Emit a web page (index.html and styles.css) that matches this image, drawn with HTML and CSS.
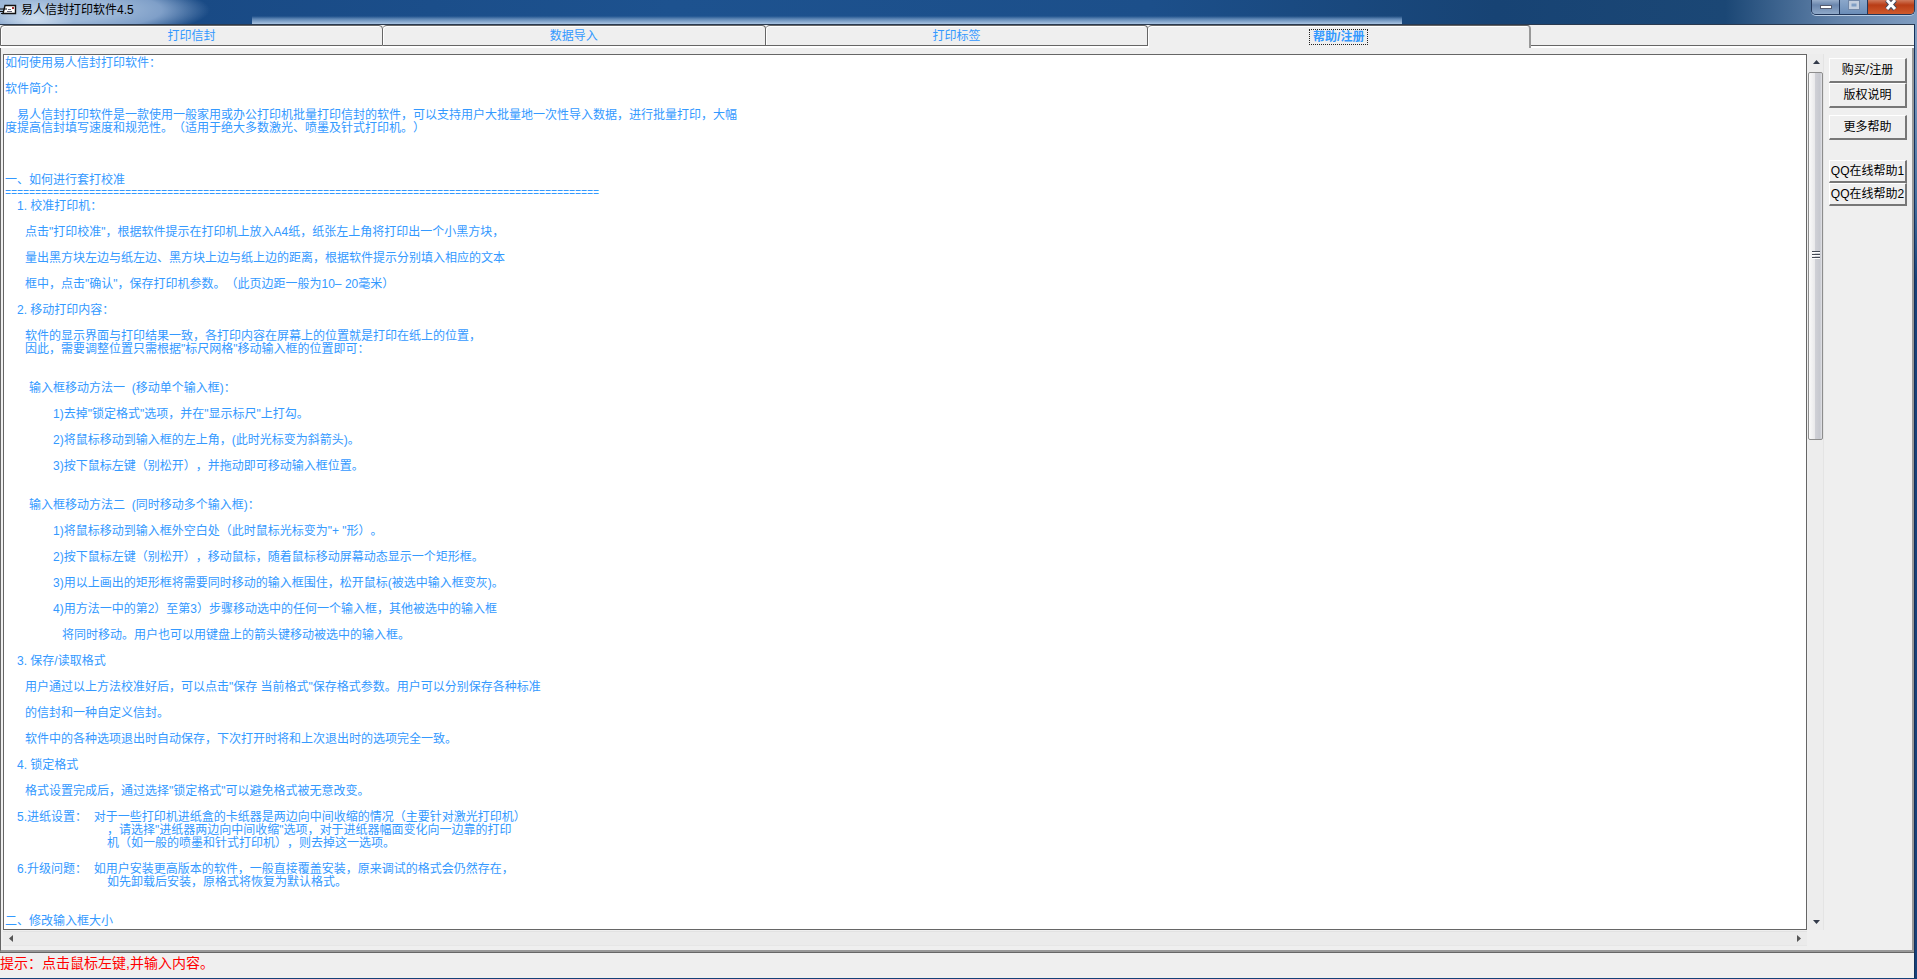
FILE: index.html
```html
<!DOCTYPE html>
<html lang="zh-CN">
<head>
<meta charset="utf-8">
<title>易人信封打印软件4.5</title>
<link rel="stylesheet" href="styles.css">
</head>
<body>
<header class="titlebar">
  <svg class="app-icon" width="17" height="12" viewBox="0 0 17 12" aria-hidden="true">
    <path d="M5 1.500h10.500v8H3z" fill="#fff" stroke="#111" stroke-width="1.400"/>
    <path d="M0 5h7M0 7.500h4M1 9.500h13" stroke="#111" stroke-width="1.200"/>
    <path d="M7 7.500h5M8 5.500h3" stroke="#667" stroke-width="1"/>
    <path d="M12 3h2v2h-2z" fill="#a33"/>
  </svg>
  <h1 class="caption">易人信封打印软件4.5</h1>
  <div class="window-buttons">
    <button class="win-btn" aria-label="最小化"><svg width="12" height="14" viewBox="0 0 12 14"><rect x=".5" y="5.500" width="11" height="3" fill="#fff" stroke="#555c70"/></svg></button>
    <button class="win-btn dim" aria-label="最大化"><svg width="12" height="14" viewBox="0 0 12 14"><rect x="2" y="2" width="8" height="6" fill="none" stroke="#c3cede" stroke-width="3"/><rect x=".5" y=".5" width="11" height="9" fill="none" stroke="#7288a8"/></svg></button>
    <button class="win-btn close" aria-label="关闭"><svg width="14" height="14" viewBox="0 0 14 14"><path d="M3 0l8 9M11 0L3 9" stroke="#444a5c" stroke-width="5"/><path d="M3 0l8 9M11 0L3 9" stroke="#fff" stroke-width="3"/></svg></button>
  </div>
</header>
<main class="client">
  <nav class="tabs" role="tablist">
    <button class="tab" role="tab">打印信封</button>
    <button class="tab" role="tab">数据导入</button>
    <button class="tab" role="tab">打印标签</button>
    <button class="tab active" role="tab" aria-selected="true"><span class="focus">帮助/注册</span></button>
    <div class="tab-rest"></div>
  </nav>
  <section class="panel">
    <div class="viewer">
      <article class="memo">
<p>如何使用易人信封打印软件：</p>
<p></p>
<p>软件简介：</p>
<p></p>
<p class="in-a">易人信封打印软件是一款使用一般家用或办公打印机批量打印信封的软件，可以支持用户大批量地一次性导入数据，进行批量打印，大幅</p>
<p>度提高信封填写速度和规范性。（适用于绝大多数激光、喷墨及针式打印机。）</p>
<p></p>
<p></p>
<p></p>
<p>一、如何进行套打校准</p>
<p class="rule">===================================================================================================</p>
<p class="in-a">1. 校准打印机：</p>
<p></p>
<p class="in-b">点击"打印校准"，根据软件提示在打印机上放入A4纸，纸张左上角将打印出一个小黑方块，</p>
<p></p>
<p class="in-b">量出黑方块左边与纸左边、黑方块上边与纸上边的距离，根据软件提示分别填入相应的文本</p>
<p></p>
<p class="in-b">框中，点击"确认"，保存打印机参数。（此页边距一般为10– 20毫米）</p>
<p></p>
<p class="in-a">2. 移动打印内容：</p>
<p></p>
<p class="in-b">软件的显示界面与打印结果一致，各打印内容在屏幕上的位置就是打印在纸上的位置，</p>
<p class="in-b">因此，需要调整位置只需根据"标尺网格"移动输入框的位置即可：</p>
<p></p>
<p></p>
<p class="in-c">输入框移动方法一  (移动单个输入框)：</p>
<p></p>
<p class="in-d">1)去掉"锁定格式"选项，并在"显示标尺"上打勾。</p>
<p></p>
<p class="in-d">2)将鼠标移动到输入框的左上角，(此时光标变为斜箭头)。</p>
<p></p>
<p class="in-d">3)按下鼠标左键（别松开），并拖动即可移动输入框位置。</p>
<p></p>
<p></p>
<p class="in-c">输入框移动方法二  (同时移动多个输入框)：</p>
<p></p>
<p class="in-d">1)将鼠标移动到输入框外空白处（此时鼠标光标变为"+ "形）。</p>
<p></p>
<p class="in-d">2)按下鼠标左键（别松开），移动鼠标，随着鼠标移动屏幕动态显示一个矩形框。</p>
<p></p>
<p class="in-d">3)用以上画出的矩形框将需要同时移动的输入框围住，松开鼠标(被选中输入框变灰)。</p>
<p></p>
<p class="in-d">4)用方法一中的第2）至第3）步骤移动选中的任何一个输入框，其他被选中的输入框</p>
<p></p>
<p class="in-e">将同时移动。用户也可以用键盘上的箭头键移动被选中的输入框。</p>
<p></p>
<p class="in-a">3. 保存/读取格式</p>
<p></p>
<p class="in-b">用户通过以上方法校准好后，可以点击"保存 当前格式"保存格式参数。用户可以分别保存各种标准</p>
<p></p>
<p class="in-b">的信封和一种自定义信封。</p>
<p></p>
<p class="in-b">软件中的各种选项退出时自动保存，下次打开时将和上次退出时的选项完全一致。</p>
<p></p>
<p class="in-a">4. 锁定格式</p>
<p></p>
<p class="in-b">格式设置完成后，通过选择"锁定格式"可以避免格式被无意改变。</p>
<p></p>
<p class="in-a">5.进纸设置：  对于一些打印机进纸盒的卡纸器是两边向中间收缩的情况（主要针对激光打印机）</p>
<p class="in-f">，请选择"进纸器两边向中间收缩"选项，对于进纸器幅面变化向一边靠的打印</p>
<p class="in-f">机（如一般的喷墨和针式打印机），则去掉这一选项。</p>
<p></p>
<p class="in-a">6.升级问题：  如用户安装更高版本的软件，一般直接覆盖安装，原来调试的格式会仍然存在，</p>
<p class="in-f">如先卸载后安装，原格式将恢复为默认格式。</p>
<p></p>
<p></p>
<p>二、修改输入框大小</p>
      </article>
      <div class="vbar">
        <button class="arrow" aria-label="向上滚动"><svg width="7" height="4" viewBox="0 0 7 4"><path d="M0 4L3.500 0L7 4z" fill="#333b4a"/></svg></button>
        <div class="thumb"><svg width="8" height="9" viewBox="0 0 8 9"><path d="M0 .5h8M0 3.500h8M0 6.500h8" stroke="#444a55"/><path d="M0 1.500h8M0 4.500h8M0 7.500h8" stroke="#fff"/></svg></div>
        <button class="arrow end" aria-label="向下滚动"><svg width="7" height="4" viewBox="0 0 7 4"><path d="M0 0h7L3.500 4z" fill="#333b4a"/></svg></button>
      </div>
      <div class="hbar">
        <button class="arrow" aria-label="向左滚动"><svg width="4" height="7" viewBox="0 0 4 7"><path d="M4 0v7L0 3.500z" fill="#555"/></svg></button>
        <button class="arrow" aria-label="向右滚动"><svg width="4" height="7" viewBox="0 0 4 7"><path d="M0 0v7L4 3.500z" fill="#555"/></svg></button>
      </div>
    </div>
    <aside class="side">
      <div class="group">
        <button class="cmd">购买/注册</button>
        <button class="cmd">版权说明</button>
      </div>
      <button class="cmd">更多帮助</button>
      <div class="group qq">
        <button class="cmd">QQ在线帮助1</button>
        <button class="cmd">QQ在线帮助2</button>
      </div>
    </aside>
  </section>
  <footer class="status">提示：点击鼠标左键,并输入内容。</footer>
</main>
</body>
</html>
```
FILE: styles.css
```css
* {
  box-sizing: border-box;
}

body {
  margin: 0;
  height: 100vh;
  display: flex;
  flex-direction: column;
  overflow: hidden;
  background: linear-gradient(#7f9cc0, #7f9cc0 70px, #44709f 200px, #164178 280px);
  font: 12px/13px "Liberation Sans", "Noto Sans CJK SC", sans-serif;
  text-spacing-trim: space-all;
}

button {
  font: inherit;
  padding: 0;
  border: 0;
  background: none;
}

.titlebar {
  flex: none;
  height: 24px;
  display: flex;
  align-items: flex-start;
  background:
    radial-gradient(ellipse 40px 18px at 35px 18px, rgba(220, 232, 245, .8), transparent),
    radial-gradient(ellipse 160px 30px at 50px 10px, #9db8d8 40%, #7f9fc8 70%, transparent),
    linear-gradient(transparent 16px, #5f87b5 19px, #a9c4e2 24px) 635px 0 / 60% 100% no-repeat,
    linear-gradient(90deg, #2f5f9b 0, #194a85 10%, #1d528f 35%, #1c4f8a 60%, #174374 78%, #1b4775 90%, #6484ab 96%, #7f9cc0);
  background-position: 0 0, 0 0, 252px 0, 0 0;
}

.app-icon {
  margin: 4px 4px 0 0;
}

.caption {
  margin: 2px 0 0;
  flex: 1;
  font-size: 12px;
  font-weight: normal;
  line-height: 16px;
  color: #000;
}

.window-buttons {
  display: flex;
  height: 15px;
  margin-right: 2px;
  border: 1px solid #22375a;
  border-top: 0;
  border-radius: 0 0 5px 5px;
  overflow: hidden;
  box-shadow: 0 1px 0 #b9cce2;
}

.win-btn {
  width: 28px;
  display: flex;
  justify-content: center;
  background: linear-gradient(#98aecb, #6a86ad 5px, #8fa9c9);
  border-right: 1px solid #22375a;
}

.win-btn.dim {
  background: linear-gradient(#8ba7ca, #6b8db8);
}

.win-btn.close {
  width: 46px;
  border-right: 0;
  background: linear-gradient(#d07a5c, #b93d16 5px, #cf5a2c);
}

.client {
  flex: 1;
  min-height: 0;
  display: flex;
  flex-direction: column;
  margin: 0 2px 1px 0;
  border-top: 1px solid #2a3a50;
  border-right: 1px solid #14305a;
  background: #efefef;
}

.tabs {
  flex: none;
  height: 23px;
  display: flex;
  border-bottom: 2px solid #fff;
}

.tab {
  flex: 0 0 20%;
  height: 21px;
  padding-top: 2px;
  border-top: 1px solid #666;
  border-right: 1px solid #666;
  border-bottom: 1px solid #666;
  border-top-right-radius: 4px;
  border-top-left-radius: 4px;
  box-shadow: inset 1px 1px 0 #fff;
  color: #39f;
}

.tab:first-child {
  border-left: 1px solid #666;
}

.tab.active {
  height: 23px;
  padding-top: 0;
  border-right: 2px solid #999;
  border-bottom: 0;
  background: #efefef;
  font-weight: bold;
}

.focus {
  display: inline-block;
  padding: 0 3px;
  outline: 1px dotted #222;
  line-height: 14px;
}

.tab-rest {
  flex: 1;
  height: 21px;
  border-bottom: 1px solid #666;
}

.panel {
  flex: 1;
  min-height: 0;
  display: flex;
  padding: 6px 4px 4px 2px;
  border-left: 1px solid #666;
  border-right: 2px solid #999;
  border-bottom: 2px solid #999;
}

.viewer {
  flex: 1;
  min-width: 0;
  display: grid;
  grid-template-columns: 1fr 16px;
  grid-template-rows: minmax(0, 1fr) 15px;
  gap: 1px;
}

.memo {
  overflow: hidden;
  padding: 2px 1px;
  border: 1px solid #666;
  background: #fff;
  color: #39f;
}

.memo p {
  margin: 0;
  height: 13px;
  white-space: pre;
}

.memo .in-a { padding-left: 12px; }
.memo .in-b { padding-left: 20px; }
.memo .in-c { padding-left: 24px; }
.memo .in-d { padding-left: 48px; }
.memo .in-e { padding-left: 57px; }
.memo .in-f { padding-left: 102px; }

.memo .rule {
  font-family: "Liberation Mono", monospace;
  font-size: 10px;
}

.vbar {
  display: flex;
  flex-direction: column;
  align-items: stretch;
  background: #ededed;
  border-right: 1px solid #e4e4e4;
}

.arrow {
  flex: none;
  width: 16px;
  height: 16px;
  display: flex;
  align-items: center;
  justify-content: center;
}

.thumb {
  height: 42%;
  margin: 2px 0 0;
  display: flex;
  align-items: center;
  justify-content: center;
  border: 1px solid #8d8d8d;
  border-radius: 2px;
  background: linear-gradient(90deg, #fafafa, #e9e9eb 45%, #cfd0d6 50%, #c6c8cf 85%, #e4e4e8);
}

.arrow.end {
  margin-top: auto;
}

.hbar {
  display: flex;
  justify-content: space-between;
  align-items: center;
  background: #ebebeb;
  border-top: 1px solid #e2e2e2;
  border-bottom: 1px solid #e6e6e6;
}

.side {
  flex: none;
  width: 84px;
  display: flex;
  flex-direction: column;
  gap: 7px;
  padding: 4px 0 0 5px;
}

.group {
  display: flex;
  flex-direction: column;
}

.group.qq {
  margin-top: 13px;
}

.cmd {
  width: 78px;
  height: 25px;
  white-space: nowrap;
  color: #000;
  background: #efefef;
  border: solid;
  border-width: 1px 2px 2px 1px;
  border-color: #fff #777 #777 #fff;
}

.qq .cmd {
  height: 23px;
}

.status {
  flex: none;
  height: 26px;
  border-top: 1px solid #666;
  color: #f00;
  font-size: 14px;
  line-height: 20px;
}
```
